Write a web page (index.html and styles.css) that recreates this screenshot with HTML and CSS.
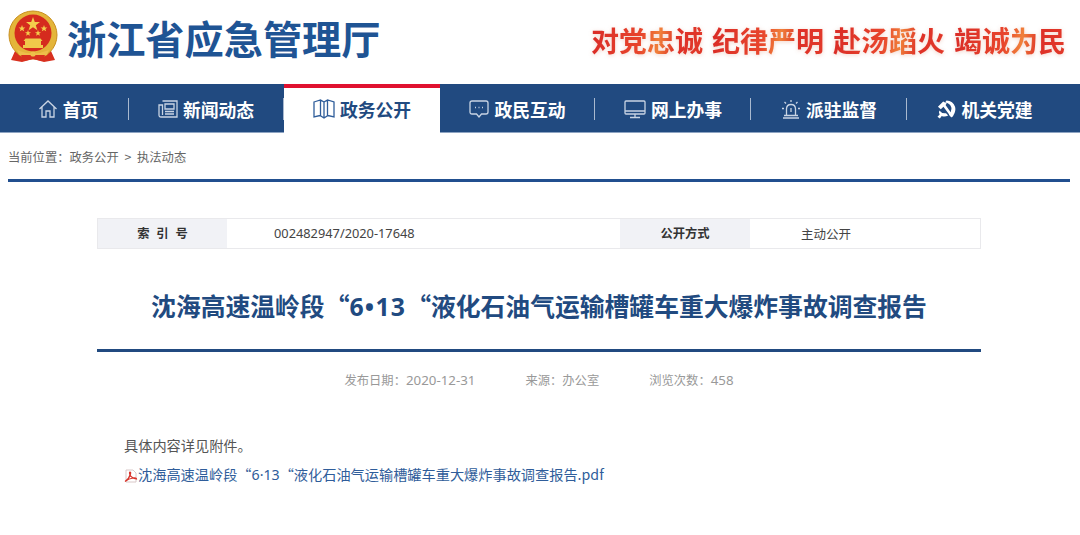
FILE: index.html
```html
<!DOCTYPE html>
<html lang="zh-CN">
<head>
    <meta charset="UTF-8">
    <title>浙江省应急管理厅</title>
    <link rel="stylesheet" href="styles.css">
</head>
<body>
    <header class="top">
        <div class="brand">
            <svg class="emblem" viewBox="0 0 50 54">
                <path d="M7 41 L3 50 L14 52 L25 49 L36 52 L47 50 L43 41 Z" fill="#d8301f"/>
                <circle cx="25" cy="25" r="24" fill="#e4b53a"/>
                <circle cx="25" cy="25" r="24" fill="none" stroke="#c98f1f" stroke-width="1"/>
                <circle cx="25" cy="23" r="18.5" fill="#d52b1e"/>
                <path d="M25 7 l1.8 5 h5.2 l-4.2 3.2 1.6 5 -4.4 -3 -4.4 3 1.6 -5 -4.2 -3.2 h5.2z" fill="#f3cf4c"/>
                <path d="M14 15 l.9 2.4 h2.5 l-2 1.5 .8 2.4 -2.2 -1.4 -2.2 1.4 .8 -2.4 -2 -1.5 h2.5z M36 15 l.9 2.4 h2.5 l-2 1.5 .8 2.4 -2.2 -1.4 -2.2 1.4 .8 -2.4 -2 -1.5 h2.5z M20 20 l.8 2.2 h2.3 l-1.9 1.4 .7 2.2 -1.9 -1.3 -1.9 1.3 .7 -2.2 -1.9 -1.4 h2.3z M30 20 l.8 2.2 h2.3 l-1.9 1.4 .7 2.2 -1.9 -1.3 -1.9 1.3 .7 -2.2 -1.9 -1.4 h2.3z" fill="#f3cf4c"/>
                <path d="M15 38 h20 v-3 h-2 v-4 h1.5 l-2 -2.5 h-15 l-2 2.5 h1.5 v4 h-2z" fill="#f0c94a"/>
                <path d="M9 40 q16 7 32 0 l-2 5 q-14 5 -28 0z" fill="#eec04a"/>
                <path d="M13 45 h24 l-3 6 -9 -2 -9 2z" fill="#d8301f"/>
                <circle cx="25" cy="44" r="2.6" fill="#eec04a"/>
            </svg>
            <span class="brand-name">浙江省应急管理厅</span>
        </div>
        <div class="slogan">
            <span>对党忠诚</span>
            <span>纪律严明</span>
            <span>赴汤蹈火</span>
            <span>竭诚为民</span>
        </div>
    </header>

    <nav class="nav">
        <a class="nav-item first">
            <svg class="ico" viewBox="0 0 20 20"><path d="M1.5 10 L10 2 L18.5 10 M4 8 V18 H8 V12 H12 V18 H16 V8"/></svg>
            首页
        </a>
        <a class="nav-item">
            <svg class="ico" viewBox="0 0 20 20"><path d="M4.5 2 H19 V18 H3 Q1 18 1 16 V6 H4.5 V16 M7 5 H16 V10 H7 Z M7 12.5 H16 M7 15 H16"/></svg>
            新闻动态
        </a>
        <a class="nav-item active">
            <svg class="ico" viewBox="0 0 22 20"><path d="M1 3 L7.500 1 L11 3 L14.500 1 L21 3 V18 L15 16.500 L11 19 L7 16.500 L1 18 Z M7.500 1 V16.500 M11 3 V19 M14.500 1 V16.500"/></svg>
            政务公开
        </a>
        <a class="nav-item narrow">
            <svg class="ico" viewBox="0 0 20 20"><path d="M3 2 H17 Q19 2 19 4 V13 Q19 15 17 15 H12.500 L10 18 L7.500 15 H3 Q1 15 1 13 V4 Q1 2 3 2 Z M6 8.500 H7 M9.500 8.500 H10.500 M13 8.500 H14"/></svg>
            政民互动
        </a>
        <a class="nav-item">
            <svg class="ico wide" viewBox="0 0 22 20"><path d="M2 2 H20 Q21 2 21 3 V14 Q21 15 20 15 H2 Q1 15 1 14 V3 Q1 2 2 2 Z M1 12 H21 M11 15 V18 M6 18.500 H16"/></svg>
            网上办事
        </a>
        <a class="nav-item">
            <svg class="ico" viewBox="0 0 20 20"><path d="M5.500 16 V10 Q5.500 5.500 10 5.500 Q14.500 5.500 14.500 10 V16 M3 16.500 H17 M2 19 H18 M10 1 V3 M3.500 3 L5 4.500 M16.500 3 L15 4.500 M1 9.500 H3 M17 9.500 H19 M10 9 V13"/></svg>
            派驻监督
        </a>
        <a class="nav-item last">
            <svg class="party" viewBox="0 0 20 20">
                <path d="M10 0.500 Q17 1 19 7 Q20.500 13 15.500 18.500 L12.500 15.500 Q16 11.500 15 7.500 Q13.500 3 8.500 2.500 Z"/>
                <path d="M6.500 1.500 L1 7 L4 9.800 L6.800 7.200 L14.500 17.500 L17 16.500 L9 5.200 L10.300 3.800 Z"/>
                <path d="M2.500 11 Q5 14.500 9.500 14 L11.800 16.300 Q8 18.300 5 16.800 L3 19.500 L0.500 17.500 L2.800 15.300 Q1.500 13 2.500 11 Z"/>
            </svg>
            机关党建
        </a>
    </nav>

    <div class="crumb">当前位置：政务公开 <span class="crumb-sep">&gt;</span> 执法动态</div>

    <main class="article">
        <div class="info">
            <div class="info-label spaced">索 引 号</div>
            <div class="info-value num">002482947/2020-17648</div>
            <div class="info-label">公开方式</div>
            <div class="info-value open">主动公开</div>
        </div>

        <h1 class="title">沈海高速温岭段“<span class="latin">6•13</span>“液化石油气运输槽罐车重大爆炸事故调查报告</h1>

        <div class="meta">
            <span>发布日期：<span class="digits">2020-12-31</span></span>
            <span>来源：办公室</span>
            <span>浏览次数：<span class="digits">458</span></span>
        </div>

        <div class="content">
            <p>具体内容详见附件。</p>
            <p class="attach">
                <svg class="pdf" viewBox="0 0 14 14">
                    <path d="M2 1 H9 L12 4 V13 H2 Z" fill="#fff" stroke="#d9c8c8" stroke-width="1"/>
                    <path d="M1 12.500 Q5 10 6.500 5 Q7 3 6 3 Q5 3 6 6 Q7.500 9 12.500 10 Q12.500 8.500 9 9 Q5 9.500 1 12.500 Z" fill="none" stroke="#d8332a" stroke-width="1.200"/>
                </svg><a class="file">沈海高速温岭段“<span class="num-inline">6·13</span>“液化石油气运输槽罐车重大爆炸事故调查报告.pdf</a>
            </p>
        </div>
    </main>
</body>
</html>
```

FILE: styles.css
```css
body {
    margin: 0;
    padding: 0;
    background-color: #fff;
    font-family: "Noto Sans CJK SC", sans-serif;
    color: #555;
    overflow: hidden;
}
.top {
    height: 84px;
    display: flex;
    justify-content: space-between;
    align-items: center;
    padding: 0 14px 10px 8px;
    box-sizing: border-box;
}
.brand {
    display: flex;
    align-items: center;
}
.emblem {
    width: 50px;
    height: 54px;
    margin-right: 9px;
}
.brand-name {
    font-size: 39.200px;
    line-height: 50px;
    font-weight: 700;
    color: #1f5494;
}
.slogan {
    display: flex;
    gap: 9px;
    margin-top: 5px;
    font-size: 28px;
    line-height: 40px;
    font-weight: 700;
    filter: drop-shadow(0 1px 2px rgba(200, 80, 40, 0.25));
}
.slogan span {
    background: linear-gradient(100deg, #d92a26 0%, #e8452c 45%, #f0803a 60%, #de3027 75%, #e23a2a 100%);
    -webkit-background-clip: text;
    background-clip: text;
    color: transparent;
}
.nav {
    height: 49px;
    background-color: #214a80;
    border-bottom: 1px solid #8ea4c2;
    box-sizing: border-box;
    display: flex;
    align-items: stretch;
}
.nav-item {
    width: 156px;
    flex: none;
    display: flex;
    align-items: center;
    justify-content: center;
    gap: 5px;
    padding-top: 2px;
    box-sizing: border-box;
    color: #fff;
    font-size: 17.800px;
    font-weight: 700;
    position: relative;
}
.nav-item.first {
    width: 128px;
    padding-left: 8px;
}
.nav-item.narrow {
    width: 155px;
}
.nav-item::after {
    content: "";
    position: absolute;
    right: 0;
    top: 14px;
    height: 22px;
    width: 1px;
    background-color: #a9b9cf;
}
.nav-item.first::after {
    right: -1px;
}
.nav-item.active::after,
.nav-item.last::after {
    display: none;
}
.nav-item.active {
    background-color: #fff;
    color: #214a80;
    border-top: 4px solid #e0112f;
    padding: 0 0 3px 0;
    height: 49px;
}
.ico {
    width: 20px;
    height: 20px;
    fill: none;
    stroke: #c9d4e3;
    stroke-width: 1.300;
}
.active .ico {
    width: 22px;
    stroke: #2f5d9a;
}
.ico.wide {
    width: 22px;
}
.party {
    width: 19px;
    height: 19px;
    fill: #fff;
}
.crumb {
    height: 44px;
    margin: 0 10px 0 8px;
    padding-top: 2px;
    border-bottom: 3px solid #214f8f;
    font-size: 12.300px;
    line-height: 44px;
    color: #666;
}
.crumb-sep {
    margin: 0 3px;
}
.article {
    width: 884px;
    margin-left: 97px;
    padding-top: 36px;
}
.info {
    height: 31px;
    border: 1px solid #e9e9ec;
    box-sizing: border-box;
    display: grid;
    grid-template-columns: 129px 393px 130px 1fr;
    align-items: stretch;
    font-size: 12.300px;
    line-height: 29px;
    color: #444;
}
.info-label {
    background-color: #f1f2f6;
    text-align: center;
    font-weight: 700;
    color: #333;
}
.spaced {
    word-spacing: 4px;
}
.info-value.num {
    padding-left: 47px;
    font-family: "Noto Sans", sans-serif;
    font-size: 12.800px;
}
.info-value.open {
    padding-left: 51px;
    font-size: 12.500px;
}
.title {
    margin: 0;
    height: 103px;
    border-bottom: 3px solid #214a80;
    box-sizing: border-box;
    padding-top: 38px;
    font-size: 24.800px;
    line-height: 36px;
    font-weight: 700;
    text-align: center;
    color: #214a80;
    white-space: nowrap;
}
.latin {
    font-family: "Noto Sans", sans-serif;
    letter-spacing: 1.200px;
}
.num-inline {
    font-family: "Noto Sans", sans-serif;
}
.meta {
    display: flex;
    justify-content: center;
    gap: 50px;
    margin-top: 19px;
    font-size: 12.300px;
    line-height: 18px;
    color: #999;
}
.digits {
    font-family: "Noto Sans", sans-serif;
    font-size: 13.300px;
}
.content {
    padding: 46px 0 0 27px;
    font-size: 14.200px;
    line-height: 20px;
    color: #555;
}
.content p {
    margin: 0 0 9px 0;
}
.attach {
    display: flex;
    align-items: center;
    white-space: nowrap;
}
.pdf {
    width: 14px;
    height: 14px;
    margin-top: 3px;
}
.file {
    color: #2f5d9a;
}
```
